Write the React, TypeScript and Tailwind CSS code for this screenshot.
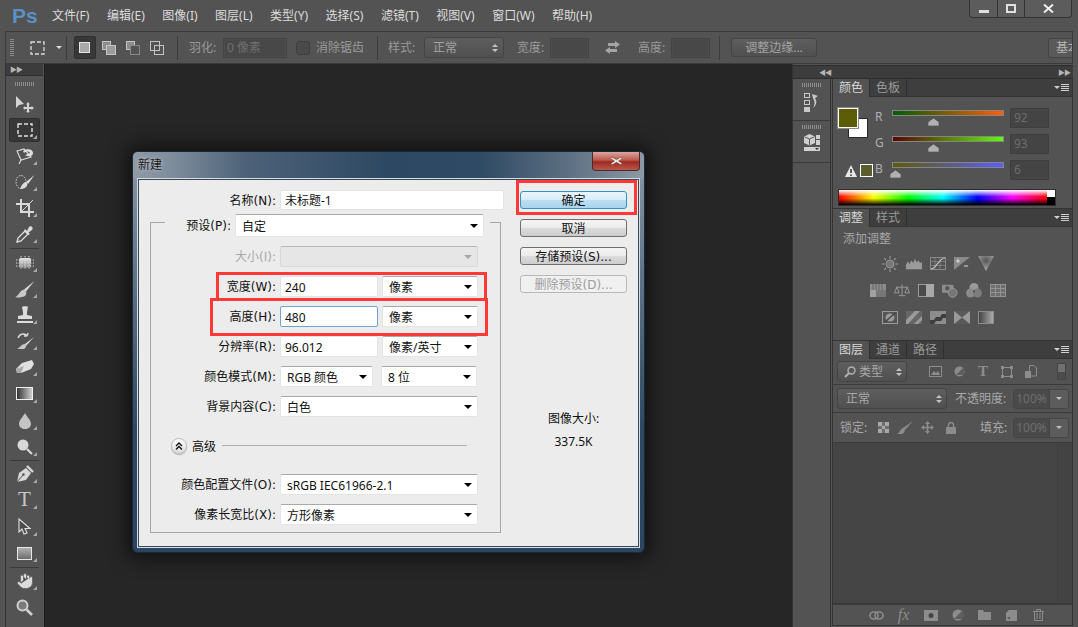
import type { ReactNode } from "react";
import { Hand } from "lucide-react";

const menus = ["文件(F)", "编辑(E)", "图像(I)", "图层(L)", "类型(Y)", "选择(S)", "滤镜(T)", "视图(V)", "窗口(W)", "帮助(H)"];
const labelFont = "font-['DejaVu_Sans','Noto_Sans_CJK_SC',sans-serif]";

function Corner() {
  return <span className="absolute right-[3px] bottom-[4px] w-0 h-0 border-l-[4px] border-l-transparent border-b-[4px] border-b-[#a8a8a8]" />;
}

function Grip({ w = 20 }: { w?: number }) {
  return (
    <svg width={w} height="4">
      <line x1="0" y1="2" x2={w} y2="2" stroke="#8c8c8c" strokeWidth="4" strokeDasharray="1 1" />
    </svg>
  );
}

const toolIcons: { icon?: ReactNode; corner?: boolean; active?: boolean; tall?: boolean; sep?: string }[] = [
  {
    icon: (
      <svg width="20" height="18" viewBox="0 0 20 18" fill="#d4d4d4">
        <path d="M1 1 L1 13 L4 10 L9 9 Z" />
        <path d="M13 7 L15 9.5 L14 9.5 L14 12 L16.5 12 L16.5 11 L19 13 L16.5 15 L16.5 14 L14 14 L14 16 L15 16 L13 18 L11 16 L12 16 L12 14 L10 14 L10 15 L8 13 L10 11 L10 12 L12 12 L12 9.5 L11 9.5 Z" />
      </svg>
    ),
  },
  {
    icon: (
      <svg width="16" height="14">
        <rect x="1" y="1" width="14" height="12" fill="none" stroke="#e0e0e0" strokeWidth="1.4" strokeDasharray="4 2" />
      </svg>
    ),
    active: true,
    corner: true,
  },
  {
    icon: (
      <svg width="18" height="16" viewBox="0 0 18 16" fill="none" stroke="#d8d8d8" strokeWidth="1.2">
        <path d="M1 3 L8 1 L15 9 L5 12 Z" />
        <path d="M7 3 C11 0 17 1 17 5 C17 9 12 9 9 7 C11 6 13 6 14 5 C13 3 10 3 8 5 Z" fill="#e0e0e0" stroke="none" />
        <path d="M5 12 L3 16" />
      </svg>
    ),
    corner: true,
  },
  {
    icon: (
      <svg width="20" height="16" viewBox="0 0 20 16" fill="none">
        <ellipse cx="6" cy="8" rx="5" ry="6.5" stroke="#d8d8d8" strokeDasharray="1.5 1.2" />
        <path d="M19.5 1 L11 8 L13 10 Z" fill="#dcdcdc" />
        <path d="M5 15 C7 10 9 8 11 8 C14 10 12 15 5 15 Z" fill="#dcdcdc" />
      </svg>
    ),
    corner: true,
  },
  {
    icon: (
      <svg width="18" height="18" viewBox="0 0 18 18" fill="none" stroke="#dadada" strokeWidth="2">
        <path d="M0 5 L13 5 L13 18" />
        <path d="M5 0 L5 13 L18 13" />
        <path d="M4 14 L17 1" strokeWidth="1" />
      </svg>
    ),
    corner: true,
  },
  {
    icon: (
      <svg width="18" height="18" viewBox="0 0 18 18">
        <path d="M1 17 L2 13 L9 6 L12 9 L5 16 Z" fill="none" stroke="#e0e0e0" strokeWidth="1.3" />
        <path d="M9 4 L11 6 L13 2 C15 0 18 3 16 5 L12.5 7.5 L14 9 L12 10 L8 6 Z" fill="#dcdcdc" />
      </svg>
    ),
    corner: true,
  },
  { sep: "h-[3px]" },
  {
    icon: (
      <svg width="18" height="14" viewBox="0 0 18 14">
        <defs>
          <linearGradient id="heal" x1="0" y1="0" x2="0" y2="1">
            <stop offset="0" stopColor="#e8e8e8" />
            <stop offset="1" stopColor="#777" />
          </linearGradient>
        </defs>
        <rect x="3" y="2" width="12" height="10" rx="1.5" fill="url(#heal)" />
        <path d="M0 4 H18 M0 7 H18 M0 10 H18 M5 0 V14 M9 0 V14 M13 0 V14" stroke="#dcdcdc" strokeDasharray="1.4 1.4" fill="none" />
      </svg>
    ),
    corner: true,
  },
  {
    icon: (
      <svg width="20" height="18" viewBox="0 0 20 18">
        <path d="M19.5 1 L9 9.5 L11 11.5 Z" fill="#d8d8d8" />
        <path d="M0 17 C4 16 5 10 9 9.5 C12 10.5 12 14 10 16 C6 17.5 4 18 0 17 Z" fill="#c8c8c8" />
      </svg>
    ),
    corner: true,
  },
  {
    icon: (
      <svg width="16" height="18" viewBox="0 0 16 18" fill="#dcdcdc">
        <path d="M5 1 C5 0 11 0 11 1 L10 6 L10 9 L15 10 L15 13 L1 13 L1 10 L6 9 L6 6 Z" />
        <rect x="0" y="15" width="16" height="2" />
      </svg>
    ),
    corner: true,
  },
  {
    icon: (
      <svg width="20" height="18" viewBox="0 0 20 18">
        <path d="M3 6 C5 1 10 1 12 4 M12 4 L13 1 M12 4 L9 4" fill="none" stroke="#d8d8d8" strokeWidth="1.5" />
        <path d="M19 5 L10 12 L11 14 Z" fill="#d8d8d8" />
        <path d="M2 17 C5 16 6 12 10 12 C12 13 11 16 9 17 Z" fill="#c8c8c8" />
      </svg>
    ),
    corner: true,
  },
  {
    icon: (
      <svg width="18" height="14" viewBox="0 0 18 14">
        <path d="M6 3 L16 0 L18 4 L15 9 L5 13 L1 13 L0 9 Z" fill="#e0e0e0" />
        <path d="M0 9 L1 13 L5 13 L8 6 Z" fill="#a8a8a8" />
      </svg>
    ),
    corner: true,
  },
  { icon: <div className="w-[17px] h-[13px] border border-[#f0f0f0] bg-[linear-gradient(90deg,#333,#cfcfcf)]" />, corner: true, tall: true },
  {
    icon: (
      <svg width="12" height="16" viewBox="0 0 12 16">
        <path d="M6 0 C8 4 12 7 12 11 C12 14 9 16 6 16 C3 16 0 14 0 11 C0 7 4 4 6 0 Z" fill="#c4c4c4" />
      </svg>
    ),
    corner: true,
    tall: true,
  },
  {
    icon: (
      <svg width="16" height="16" viewBox="0 0 16 16">
        <circle cx="6" cy="6" r="5.5" fill="#d8d8d8" />
        <path d="M10 10 L15 15" stroke="#d8d8d8" strokeWidth="2.2" />
      </svg>
    ),
    corner: true,
  },
  { sep: "h-[1px]" },
  {
    icon: (
      <svg width="18" height="18" viewBox="0 0 18 18">
        <path d="M1 17 L3 8 L10 3 L15 8 L10 15 Z" fill="#d8d8d8" />
        <path d="M1 17 L7 10" stroke="#535353" strokeWidth="1" />
        <circle cx="7.5" cy="9.5" r="1.2" fill="#535353" />
        <path d="M11 1 L17 7" stroke="#d8d8d8" strokeWidth="2.4" />
      </svg>
    ),
    corner: true,
  },
  {
    icon: <span className="font-['Liberation_Serif',serif] text-[21px] leading-none text-[#c8c8c8]">T</span>,
    corner: true,
  },
  {
    icon: (
      <svg width="14" height="18" viewBox="0 0 14 18">
        <path d="M1 1 L1 14 L4 11 L6 16 L9 15 L7 10.5 L12 10.5 Z" fill="#4a4a4a" stroke="#e0e0e0" strokeWidth="1.1" />
      </svg>
    ),
    corner: true,
    tall: true,
  },
  { icon: <div className="w-[15px] h-[13px] border border-[#e8e8e8] bg-[linear-gradient(180deg,#b0b0b0,#6c6c6c)]" />, corner: true },
  { sep: "h-[2px]" },
  { icon: <Hand className="w-[18px] h-[18px] fill-[#dcdcdc] text-[#666]" strokeWidth={1.2} />, corner: true },
  {
    icon: (
      <svg width="17" height="17" viewBox="0 0 17 17">
        <circle cx="6.5" cy="6.5" r="5" fill="#7a7a7a" stroke="#cfcfcf" strokeWidth="2" />
        <path d="M10.5 10.5 L16 16" stroke="#cfcfcf" strokeWidth="2.6" />
      </svg>
    ),
  },
];

function Toolbox() {
  return (
    <div className="w-[39px] ml-[5px] border-l border-[#333] flex flex-col items-center shrink-0 overflow-hidden pr-[1px]">
      <div className="w-full h-[12px] shrink-0 bg-[#3c3c3c] border-b border-[#2e2e2e] flex items-center pl-[4px] text-[7px] leading-none text-[#b4b4b4] tracking-[-1px]">
        ▶▶
      </div>
      <div className="h-[15px] shrink-0 flex items-center">
        <Grip />
      </div>
      {toolIcons.map((t, i) => {
        if (t.sep) {
          return (
            <div key={i} className={`w-[29px] shrink-0 flex flex-col justify-center ${t.sep}`}>
              <div className="h-px bg-[#3a3a3a]" />
            </div>
          );
        }
        return (
          <div key={i} className={`relative w-[31px] shrink-0 flex items-center justify-center ${t.tall ? "h-[27px]" : "h-[26px]"}`}>
            {t.active && <div className="absolute inset-x-0 -inset-y-[-1px] rounded-[2px] bg-[#383838] border border-[#2f2f2f]" />}
            <div className="relative">{t.icon}</div>
            {t.corner && <Corner />}
          </div>
        );
      })}
    </div>
  );
}

function ModeIcon({ kind }: { kind: number }) {
  return (
    <svg width="14" height="14" viewBox="0 0 14 14">
      {kind === 0 && <rect x="1.5" y="1.5" width="10" height="10" fill="#a8a8a8" stroke="#e4e4e4" />}
      {kind === 1 && (
        <>
          <rect x="0.5" y="0.5" width="8" height="8" fill="#8c8c8c" stroke="#c4c4c4" />
          <rect x="4.5" y="4.5" width="9" height="9" fill="#9c9c9c" stroke="#c4c4c4" />
        </>
      )}
      {kind === 2 && (
        <>
          <rect x="0.5" y="0.5" width="8" height="8" fill="#8c8c8c" stroke="#c4c4c4" />
          <rect x="4.5" y="4.5" width="9" height="9" fill="#535353" stroke="#888" />
        </>
      )}
      {kind === 3 && (
        <>
          <rect x="0.5" y="0.5" width="9" height="9" fill="none" stroke="#c4c4c4" />
          <rect x="4.5" y="4.5" width="9" height="9" fill="none" stroke="#c4c4c4" />
        </>
      )}
    </svg>
  );
}

function Updown() {
  return (
    <span className="flex flex-col gap-[2px]">
      <span className="w-0 h-0 border-x-[3px] border-x-transparent border-b-[3px] border-b-[#c4c4c4]" />
      <span className="w-0 h-0 border-x-[3px] border-x-transparent border-t-[3px] border-t-[#c4c4c4]" />
    </span>
  );
}

function OptionsBar() {
  const sep = <div className="w-px h-[24px] bg-[#3c3c3c]" />;
  const field = "h-[20px] bg-[#484848] border border-[#444] shadow-[inset_0_0_0_1px_#4c4c4c]";
  return (
    <div className="h-[33px] mx-[5px] border-t border-b border-t-[#3a3a3a] border-b-[#3a3a3a] border-x border-x-[#3a3a3a] flex items-center text-[12px] text-[#9a9a9a] overflow-hidden shrink-0">
      <div className="ml-[4px] w-[4px] h-[18px] bg-[repeating-linear-gradient(180deg,#8a8a8a_0,#8a8a8a_1px,transparent_1px,transparent_2px)]" />
      <svg width="16" height="14" className="ml-[16px]">
        <rect x="1" y="1" width="13" height="12" fill="none" stroke="#dcdcdc" strokeWidth="1.3" strokeDasharray="4 2" />
      </svg>
      <span className="ml-[10px] w-0 h-0 border-x-[3px] border-x-transparent border-t-[3px] border-t-[#dcdcdc]" />
      <div className="ml-[4px]">{sep}</div>
      <div className="ml-[7px] w-[22px] h-[23px] rounded-[2px] bg-[#383838] border border-[#303030] flex items-center justify-center">
        <ModeIcon kind={0} />
      </div>
      <div className="ml-[6px] w-[14px]"><ModeIcon kind={1} /></div>
      <div className="ml-[10px] w-[14px]"><ModeIcon kind={2} /></div>
      <div className="ml-[10px] w-[14px]"><ModeIcon kind={3} /></div>
      <div className="ml-[13px]">{sep}</div>
      <span className="ml-[11px] w-[28px] whitespace-nowrap">羽化:</span>
      <div className={`ml-[6px] w-[64px] ${field} px-[3px] leading-[18px] text-[#6e6e6e]`}>0 像素</div>
      <div className="ml-[9px] w-[14px] h-[14px] rounded-[3px] bg-[#4a4a4a] border border-[#3e3e3e]" />
      <span className="ml-[6px] w-[48px] whitespace-nowrap">消除锯齿</span>
      <div className="ml-[13px]">{sep}</div>
      <span className="ml-[10px] w-[30px] whitespace-nowrap">样式:</span>
      <div className="ml-[6px] w-[80px] h-[21px] rounded-[3px] bg-[linear-gradient(180deg,#5e5e5e,#505050)] border border-[#444] flex items-center justify-between pl-[8px] pr-[5px] text-[#a4a4a4]">
        正常
        <Updown />
      </div>
      <span className="ml-[13px] w-[30px] whitespace-nowrap">宽度:</span>
      <div className={`ml-[3px] w-[39px] ${field}`} />
      <svg width="15" height="13" viewBox="0 0 15 13" className="ml-[16px]" fill="#a4a4a4">
        <path d="M10 0 L15 3.5 L10 7 L10 5 L3 5 L3 2 L10 2 Z" />
        <path d="M5 6 L0 9.5 L5 13 L5 11 L12 11 L12 8 L5 8 Z" />
      </svg>
      <span className="ml-[18px] w-[30px] whitespace-nowrap">高度:</span>
      <div className={`ml-[3px] w-[39px] ${field}`} />
      <div className="ml-[9px]">{sep}</div>
      <div className="ml-[11px] w-[86px] h-[19px] rounded-[3px] bg-[linear-gradient(180deg,#5e5e5e,#505050)] border border-[#444] text-center leading-[17px] text-[#a4a4a4]">
        调整边缘...
      </div>
      <div className="ml-[231px] w-[24px] h-[20px] rounded-l-[3px] bg-[#5a5a5a] border border-r-0 border-[#444] pl-[7px] leading-[18px] text-[#b4b4b4] whitespace-nowrap overflow-hidden">
        基本
      </div>
    </div>
  );
}

function Tabs({ items }: { items: string[] }) {
  return (
    <div className="h-[18px] bg-[#3e3e3e] border-b border-[#343434] flex items-stretch relative shrink-0 text-[12px]">
      {items.map((t, i) => (
        <div
          key={t}
          className={
            i === 0
              ? "w-[37px] text-center leading-[18px] bg-[#535353] text-[#d6d6d6] border-r border-[#2f2f2f] h-[18px]"
              : "w-[37px] text-center leading-[17px] text-[#9a9a9a] border-r border-[#2f2f2f]"
          }
        >
          {t}
        </div>
      ))}
      <div className="ml-auto mr-[3px] flex items-center gap-[1px]">
        <span className="w-0 h-0 border-x-[3px] border-x-transparent border-t-[3px] border-t-[#d0d0d0]" />
        <span className="w-[8px] h-[7px] bg-[repeating-linear-gradient(180deg,#d0d0d0_0,#d0d0d0_1px,transparent_1px,transparent_2px)]" />
      </div>
    </div>
  );
}

function Thumb({ x }: { x: string }) {
  return (
    <svg width="11" height="8" className={`absolute top-[8px] ${x}`}>
      <path d="M0 8 L0 4 L5.5 0 L11 4 L11 8 Z" fill="#b0b0b0" stroke="#3a3a3a" strokeWidth="0.5" />
    </svg>
  );
}

function Slider({ label, bar, value, thumb, extra }: { label: string; bar: string; value: string; thumb: string; extra?: ReactNode }) {
  return (
    <div className="h-[26px] flex items-start relative">
      {extra}
      <span className="absolute left-[37px] top-[1px] text-[12px] leading-[16px] text-[#b0b0b0]">{label}</span>
      <div className="absolute left-[54px] top-[2px] w-[112px] h-[16px]">
        <div className={`h-[6px] border border-[#858585] ${bar}`} />
        <Thumb x={thumb} />
      </div>
      <div className="absolute left-[172px] top-0 w-[39px] h-[20px] bg-[#444] border border-[#3e3e3e] px-[3px] text-[12px] leading-[18px] text-[#6c6c6c]">{value}</div>
    </div>
  );
}

function ColorPanel() {
  return (
    <div className="h-[130px] flex flex-col border-b border-[#343434] shrink-0">
      <Tabs items={["颜色", "色板"]} />
      <div className="flex-1 px-[5px] pt-[11px] relative">
        <div className="absolute left-[15px] top-[21px] w-[20px] h-[20px] bg-white border border-[#2a2a2a]" />
        <div className="absolute left-[5px] top-[11px] w-[20px] h-[20px] bg-[#5c5d06] border border-white outline outline-[#8a8a8a]" />
        <Slider label="R" bar="bg-[linear-gradient(90deg,#005d06,#ff5d06)]" value="92" thumb="left-[36px]" />
        <Slider label="G" bar="bg-[linear-gradient(90deg,#5c0006,#5cff06)]" value="93" thumb="left-[36px]" />
        <Slider
          label="B"
          bar="bg-[linear-gradient(90deg,#5c5d00,#5c5dff)]"
          value="6"
          thumb="-left-[2px]"
          extra={
            <div className="absolute left-[7px] top-[4px] flex items-center gap-[3px]">
              <svg width="12" height="12" viewBox="0 0 12 12">
                <path d="M6 0 L12 12 L0 12 Z" fill="#e8e8e8" />
                <path d="M6 4 V8 M6 9.5 V11" stroke="#222" strokeWidth="1.4" />
              </svg>
              <div className="w-[13px] h-[13px] bg-[#5c5d2e] border border-white" />
            </div>
          }
        />
        <div className="mt-[3px] w-[218px] h-[17px] flex border border-[#2e2e2e]">
          <div className="flex-1 bg-[linear-gradient(180deg,#fff_0%,transparent_45%,transparent_55%,#000_100%),linear-gradient(90deg,#f00,#ff0,#0f0,#0ff,#00f,#f0f,#f00)]" />
          <div className="w-[8px] bg-[linear-gradient(180deg,#fff_50%,#000_50%)]" />
        </div>
      </div>
    </div>
  );
}

const g = "#9a9a9a";
const adjustRows: ReactNode[][] = [
  [
    <svg key="a" width="18" height="18" viewBox="0 0 18 18">
      <circle cx="9" cy="9" r="4.5" fill="#777" stroke={g} />
      <path d="M9 0 V3 M9 15 V18 M0 9 H3 M15 9 H18 M2.5 2.5 L4.5 4.5 M13.5 13.5 L15.5 15.5 M15.5 2.5 L13.5 4.5 M2.5 15.5 L4.5 13.5" stroke={g} strokeWidth="1.2" />
    </svg>,
    <svg key="b" width="18" height="12" viewBox="0 0 18 12">
      <path d="M0 12 V7 L2 3 L4 6 L6 2 L8 5 L10 0 L12 4 L14 2 L16 5 L18 4 V12 Z" fill={g} />
    </svg>,
    <svg key="c" width="16" height="13" viewBox="0 0 16 13" fill="none" stroke="#8a8a8a">
      <rect x="0.5" y="0.5" width="15" height="12" />
      <path d="M0 4.5 H16 M0 8.5 H16 M5 0 V13 M10 0 V13" strokeWidth="0.7" />
      <path d="M1 12 C6 12 9 1 15 1" stroke="#c0c0c0" strokeWidth="1.2" />
    </svg>,
    <svg key="d" width="16" height="13" viewBox="0 0 16 13">
      <rect width="16" height="13" fill="#8a8a8a" />
      <path d="M0 13 L16 0 L16 13 Z" fill="#555" />
      <path d="M2 4 H6 M4 2 V6 M10 9 H14" stroke="#ddd" />
    </svg>,
    <svg key="e" width="16" height="15" viewBox="0 0 16 15">
      <defs>
        <radialGradient id="vib" cx="0.5" cy="0.3" r="0.6">
          <stop offset="0" stopColor="#555" />
          <stop offset="1" stopColor="#a0a0a0" />
        </radialGradient>
      </defs>
      <path d="M0 0 H16 L8 15 Z" fill="url(#vib)" />
    </svg>,
  ],
  [
    <svg key="a" width="16" height="13" viewBox="0 0 16 13">
      <rect width="16" height="6" fill="#8c8c8c" />
      <path d="M3 0 V6 M6 0 V6 M9 0 V6 M12 0 V6" stroke="#666" />
      <rect y="6" width="16" height="7" fill="#a0a0a0" />
      <rect x="6" y="6" width="10" height="7" fill="#767676" />
    </svg>,
    <svg key="b" width="17" height="15" viewBox="0 0 17 15" fill="none" stroke={g}>
      <path d="M8.5 1 V13 M5 13 H12 M2 4 H15" />
      <path d="M3 4 L0.5 10 H5.5 Z M14 4 L11.5 10 H16.5 Z" />
    </svg>,
    <svg key="c" width="16" height="13" viewBox="0 0 16 13">
      <rect x="0.5" y="0.5" width="15" height="12" fill="#4a4a4a" stroke={g} />
      <rect x="8" y="0" width="8" height="13" fill="#a8a8a8" />
    </svg>,
    <svg key="d" width="18" height="16" viewBox="0 0 18 16">
      <rect x="0" y="1" width="13" height="9" fill="#8c8c8c" />
      <circle cx="6" cy="5" r="2.5" fill="#555" />
      <circle cx="12" cy="10" r="5" fill="#777" stroke={g} />
    </svg>,
    <svg key="e" width="16" height="15" viewBox="0 0 16 15" fill={g}>
      <circle cx="8" cy="4.5" r="4.5" />
      <circle cx="4.5" cy="10" r="4.5" fill="#8a8a8a" />
      <circle cx="11.5" cy="10" r="4.5" fill="#7c7c7c" />
      <path d="M6.5 7.5 H9.5 L8 10 Z" fill="#4c4c4c" />
    </svg>,
    <svg key="f" width="16" height="13" viewBox="0 0 16 13" fill="#6e6e6e" stroke="#949494">
      <rect x="0.5" y="0.5" width="15" height="12" />
      <path d="M0 4.5 H16 M0 8.5 H16 M5.5 0 V13 M10.5 0 V13" fill="none" />
    </svg>,
  ],
  [
    <svg key="a" width="16" height="13" viewBox="0 0 16 13">
      <rect x="0.5" y="0.5" width="15" height="12" fill="#555" stroke={g} />
      <ellipse cx="8" cy="6.5" rx="4.5" ry="4" fill={g} />
      <path d="M3 11 L13 2" stroke="#444" strokeWidth="1.2" />
    </svg>,
    <svg key="b" width="16" height="13" viewBox="0 0 16 13">
      <rect width="16" height="13" fill="#666" />
      <path d="M0 9 L9 0 L14 0 L2 13 L0 13 Z M8 13 L16 5 L16 9 L12 13 Z" fill={g} />
    </svg>,
    <svg key="c" width="16" height="13" viewBox="0 0 16 13">
      <rect width="16" height="13" fill="#8c8c8c" />
      <path d="M0 13 V9 L4 9 L6 6 L10 6 L12 3 L16 3 V7 L13 7 L11 10 L6 10 L4 13 Z" fill="#3e3e3e" />
    </svg>,
    <svg key="d" width="16" height="13" viewBox="0 0 16 13">
      <rect width="16" height="13" fill="#5a5a5a" />
      <path d="M0 0 L8 6.5 L0 13 Z M16 0 L8 6.5 L16 13 Z" fill={g} />
    </svg>,
    <div key="e" className="w-[16px] h-[13px] bg-[linear-gradient(90deg,#444,#aaa)] border border-[#8c8c8c]" />,
  ],
];

function AdjustPanel() {
  return (
    <div className="h-[132px] flex flex-col border-b border-[#343434] shrink-0">
      <Tabs items={["调整", "样式"]} />
      <div className="px-[10px] pt-[2px] text-[12px] leading-[20px] text-[#a8a8a8]">添加调整</div>
      <div className="flex flex-col items-center mt-[6px] gap-[10px] pr-[29px]">
        {adjustRows.map((row, i) => (
          <div key={i} className="h-[17px] flex items-center justify-center gap-[8px]">
            {row.map((ic, j) => (
              <div key={j} className="w-[16px] flex justify-center">
                {ic}
              </div>
            ))}
          </div>
        ))}
      </div>
    </div>
  );
}

const dim = "#8c8c8c";

function LayersPanel() {
  const pct = (
    <div className="w-[56px] h-[20px] flex rounded-[3px] border border-[#444] overflow-hidden">
      <div className="w-[35px] bg-[#4a4a4a] text-[#6e6e6e] text-center leading-[18px]">100%</div>
      <div className="flex-1 bg-[#5c5c5c] flex items-center justify-center border-l border-[#444]">
        <span className="w-0 h-0 border-x-[3px] border-x-transparent border-t-[3px] border-t-[#c0c0c0]" />
      </div>
    </div>
  );
  const selectBox = "h-[21px] rounded-[3px] bg-[linear-gradient(180deg,#5e5e5e,#505050)] border border-[#444] flex items-center justify-between pr-[4px] text-[#a8a8a8]";
  const footer: ReactNode[] = [
    <svg key="link" width="15" height="9" viewBox="0 0 15 9" fill="none" stroke={dim} strokeWidth="1.6">
      <rect x="1" y="1" width="8" height="7" rx="3.5" />
      <rect x="6" y="1" width="8" height="7" rx="3.5" />
    </svg>,
    <span key="fx" className="font-['Liberation_Serif',serif] italic text-[16px] leading-none text-[#8c8c8c]">fx</span>,
    <svg key="mask" width="14" height="11">
      <rect width="14" height="11" fill={dim} />
      <circle cx="7" cy="5.5" r="2.5" fill="#444" />
    </svg>,
    <svg key="adj" width="12" height="12">
      <circle cx="6" cy="6" r="5.5" fill={dim} />
      <path d="M2 10 L10 2 A5.5 5.5 0 0 1 10 10 Z" fill="#5e5e5e" />
    </svg>,
    <svg key="folder" width="13" height="10" viewBox="0 0 13 10">
      <path d="M0 0 H5 L6 2 H13 V10 H0 Z" fill={dim} />
    </svg>,
    <svg key="new" width="11" height="11" viewBox="0 0 11 11">
      <path d="M3 0 H11 V11 H0 V3 Z" fill={dim} />
      <path d="M1 7 H4 V10 Z" fill="#535353" />
    </svg>,
    <svg key="trash" width="11" height="12" viewBox="0 0 11 12" fill="none" stroke={dim}>
      <path d="M0 2.5 H11 M3.5 2 V0.5 H7.5 V2 M1.5 3 V11.5 H9.5 V3 M4 4 V10 M7 4 V10" />
    </svg>,
  ];
  return (
    <div className="flex-1 flex flex-col text-[12px] min-h-0">
      <Tabs items={["图层", "通道", "路径"]} />
      <div className="h-[26px] border-b border-[#3a3a3a] flex items-center pl-[4px] shrink-0">
        <div className={`w-[70px] pl-[6px] ${selectBox}`}>
          <span className="flex items-center gap-[3px]">
            <svg width="12" height="12" viewBox="0 0 12 12" fill="none" stroke="#b0b0b0" strokeWidth="1.4">
              <circle cx="7.5" cy="4.5" r="3.5" />
              <path d="M5 7 L1 11" strokeWidth="2" />
            </svg>
            类型
          </span>
          <Updown />
        </div>
        <div className="ml-[21px] w-[14px] flex justify-center">
          <svg width="13" height="11" viewBox="0 0 13 11">
            <rect x="0.5" y="0.5" width="12" height="10" fill="#505050" stroke={dim} />
            <path d="M2 9 L5 5 L7 7 L9 5 L11 9 Z" fill={dim} />
          </svg>
        </div>
        <div className="ml-[10px] w-[14px] flex justify-center">
          <svg width="11" height="11">
            <circle cx="5.5" cy="5.5" r="5" fill={dim} />
            <path d="M2 9 L9 2 A5 5 0 0 1 9 9 Z" fill="#5e5e5e" />
          </svg>
        </div>
        <span className="ml-[10px] w-[14px] text-center font-['Liberation_Serif',serif] text-[15px] leading-none text-[#8c8c8c] font-bold">T</span>
        <div className="ml-[10px] w-[14px] flex justify-center">
          <svg width="12" height="12" fill="none" stroke={dim}>
            <rect x="1.5" y="1.5" width="9" height="9" />
            <path d="M0 0 H3 V3 H0 Z M9 0 H12 V3 H9 Z M0 9 H3 V12 H0 Z M9 9 H12 V12 H9 Z" fill={dim} stroke="none" />
          </svg>
        </div>
        <div className="ml-[10px] w-[14px] flex justify-center">
          <svg width="12" height="13" viewBox="0 0 12 13">
            <path d="M4.5 0.5 H9 L11.5 3 V11 H4.5 Z" fill="none" stroke={dim} />
            <rect x="0" y="6" width="6" height="7" fill={dim} />
          </svg>
        </div>
        <div className="ml-[19px] w-[9px] h-[17px] flex flex-col border border-[#444]">
          <div className="flex-1 bg-[#707070]" />
          <div className="flex-1 bg-[#4c4c4c]" />
        </div>
      </div>
      <div className="h-[28px] border-b border-[#3a3a3a] flex items-center pl-[4px] shrink-0">
        <div className={`w-[110px] pl-[8px] ${selectBox}`}>
          正常
          <Updown />
        </div>
        <span className="ml-[8px] w-[57px] text-[#a8a8a8] whitespace-nowrap">不透明度:</span>
        <div className="ml-[1px]">{pct}</div>
      </div>
      <div className="h-[30px] border-b border-[#3a3a3a] flex items-center pl-[7px] shrink-0 text-[#a8a8a8]">
        <span className="w-[32px] whitespace-nowrap">锁定:</span>
        <svg width="11" height="11" className="ml-[6px]">
          <rect width="11" height="11" fill="#6e6e6e" />
          <path d="M0 0 H4 V4 H0 Z M7 0 H11 V4 H7 Z M4 4 H7 V7 H4 Z M0 7 H4 V11 H0 Z M7 7 H11 V11 H7 Z" fill="#a8a8a8" />
        </svg>
        <svg width="16" height="13" viewBox="0 0 16 13" className="ml-[8px]">
          <path d="M16 0 L6 7 L8 9 Z" fill={dim} />
          <path d="M0 13 C3 12 3 8 6 7 C9 8 8 12 5 13 Z" fill={dim} />
        </svg>
        <svg width="13" height="13" viewBox="0 0 13 13" className="ml-[8px]" fill={dim}>
          <path d="M6.5 0 L9 3 H7.3 V5.7 H10 V4 L13 6.5 L10 9 V7.3 H7.3 V10 H9 L6.5 13 L4 10 H5.7 V7.3 H3 V9 L0 6.5 L3 4 V5.7 H5.7 V3 H4 Z" />
        </svg>
        <svg width="10" height="12" viewBox="0 0 10 12" className="ml-[12px]">
          <rect y="5" width="10" height="7" fill={dim} />
          <path d="M2.5 5 V3 A2.5 2.5 0 0 1 7.5 3 V5" fill="none" stroke={dim} strokeWidth="1.4" />
        </svg>
        <span className="ml-[24px] w-[32px] whitespace-nowrap">填充:</span>
        <div className="ml-[1px]">{pct}</div>
      </div>
      <div className="flex-1 bg-[#454545] flex justify-end min-h-0">
        <div className="w-[15px] bg-[#434343] border-l border-[#3e3e3e]" />
      </div>
      <div className="h-[22px] border-t-2 border-[#3a3a3a] flex items-center pl-[30px] shrink-0">
        {footer.map((ic, i) => (
          <div key={i} className="w-[27px] flex justify-center">
            {ic}
          </div>
        ))}
      </div>
    </div>
  );
}

function RightDock() {
  return (
    <div className="w-[286px] shrink-0 border-l border-[#333] flex flex-col pt-[1px]">
      <div className="h-[14px] mr-[5px] bg-[#3c3c3c] border-y border-[#2e2e2e] flex items-center justify-between pr-[3px] pl-[26px] text-[7px] leading-none text-[#b4b4b4] tracking-[-1px] shrink-0">
        ◀◀<span>▶▶</span>
      </div>
      <div className="flex-1 flex mr-[5px] min-h-0">
        <div className="w-[38px] shrink-0 border-r border-[#343434] flex flex-col">
          <div className="h-[42px] border-b border-[#3a3a3a] flex flex-col items-center pt-[4px] gap-[6px]">
            <Grip />
            <svg width="15" height="19" viewBox="0 0 15 19">
              <rect x="0.5" y="0.5" width="5" height="4" fill="none" stroke="#c8c8c8" />
              <rect x="0.5" y="7.5" width="5" height="4" fill="none" stroke="#c8c8c8" />
              <rect y="14" width="6" height="5" fill="#c8c8c8" />
              <path d="M8 1 L14 3 L11 5 C13 8 13 12 9 15 C11 12 11 8 9 5 Z" fill="#c8c8c8" />
            </svg>
          </div>
          <div className="h-[42px] border-b border-[#3a3a3a] flex flex-col items-center pt-[4px] gap-[5px]">
            <Grip />
            <svg width="16" height="17" viewBox="0 0 16 17">
              <path d="M5.5 0 L11 2.5 V9 L5.5 11.5 L0 9 V2.5 Z" fill="#d0d0d0" />
              <path d="M5.5 5 V11 M0.5 2.8 L5.5 5 L10.5 2.8" stroke="#555" fill="none" />
              <rect x="12" y="1" width="4" height="4" fill="#d0d0d0" />
              <rect x="12" y="6" width="4" height="5" fill="#d0d0d0" />
              <rect y="13" width="16" height="4" fill="#d0d0d0" />
              <path d="M11 14 H15 L13 16 Z" fill="#333" />
            </svg>
          </div>
        </div>
        <div className="w-[241px] ml-[1px] mb-[1px] flex flex-col border-x border-b border-[#343434]">
          <ColorPanel />
          <AdjustPanel />
          <LayersPanel />
        </div>
      </div>
    </div>
  );
}

function Arrow({ light }: { light?: boolean }) {
  return <span className={`w-0 h-0 border-x-[4px] border-x-transparent border-t-[4px] ${light ? "border-t-[#a8a8a8]" : "border-t-black"}`} />;
}

function Sel({ w, children, tall }: { w: string; children?: ReactNode; tall?: boolean }) {
  return (
    <div className={`${w} ${tall ? "h-[23px]" : "h-[21px]"} bg-white border border-[#e4e4e4] border-t-[#a9a9a9] rounded-[2px] flex items-center justify-between pl-[6px] pr-[5px] whitespace-nowrap`}>
      <span className="pt-[2px]">{children}</span>
      <Arrow />
    </div>
  );
}

function Inp({ w, children, focus }: { w: string; children?: ReactNode; focus?: boolean }) {
  return (
    <div className={`${w} h-[21px] bg-white border rounded-[2px] px-[4px] leading-[21px] ${focus ? "border-[#6ea4cf]" : "border-[#e0e4e8]"}`}>{children}</div>
  );
}

function Row({ label, children, disabled }: { label: string; children: ReactNode; disabled?: boolean }) {
  return (
    <div className="flex items-center h-[21px] mt-[9px]">
      <div className={`w-[125px] text-right whitespace-nowrap pt-[1px] ${labelFont} ${disabled ? "text-[#a8a8a8]" : ""}`}>{label}</div>
      <div className="ml-[4px] flex gap-[4px]">{children}</div>
    </div>
  );
}

function DlgButton({ children, kind }: { children: ReactNode; kind?: "primary" | "disabled" }) {
  const cls =
    kind === "primary"
      ? "border-[#2f93c8] bg-[linear-gradient(180deg,#e8f5fc_0%,#d8edf8_50%,#bcdff2_50%,#a9d4ec_100%)]"
      : kind === "disabled"
        ? "border-[#b8b8b8] bg-[#f0f0f0] text-[#9c9c9c]"
        : "border-[#6f6f6f] bg-[linear-gradient(180deg,#f4f4f4_0%,#ebebeb_50%,#dcdcdc_50%,#cdcdcd_100%)]";
  return <div className={`h-[18px] w-[107px] mb-[10px] rounded-[3px] border text-center leading-[18px] text-[12px] whitespace-nowrap ${labelFont} ${cls}`}>{children}</div>;
}

function Dialog() {
  return (
    <div className="absolute left-[87px] top-[87px] w-[513px] h-[402px] rounded-[6px] border border-[#1c2a38] bg-[linear-gradient(180deg,#8c99a6_0%,#61758a_30%,#2c4862_70%,#2a4660_100%)] shadow-[0_0_18px_6px_rgba(0,0,0,0.55)] flex flex-col">
      <div className="h-[27px] shrink-0 rounded-t-[5px] bg-[linear-gradient(90deg,#8f9ba6_0%,#7d8c9b_8%,#4d6279_22%,#2d4862_50%,#2f4a64_68%,#5c6f82_85%,#8d99a4_100%)] flex justify-between">
        <span className="ml-[5px] mt-[4px] text-[12px] leading-[18px] text-[#1c1c1c] [text-shadow:0_0_4px_rgba(255,255,255,0.6)]">新建</span>
        <div className="mr-[4px] w-[48px] h-[19px] rounded-b-[4px] border border-t-0 border-[#4a2a2a] bg-[linear-gradient(180deg,#d9a79f_0%,#c0574c_45%,#9c2a1e_55%,#b85a4c_100%)] flex items-center justify-center">
          <svg width="11" height="8" viewBox="0 0 14 10">
            <path d="M1 0 L7 3.5 L13 0 L14 2 L9.5 5 L14 8 L13 10 L7 6.5 L1 10 L0 8 L4.5 5 L0 2 Z" fill="#f4f4f4" stroke="#5a2a26" strokeWidth="0.6" />
          </svg>
        </div>
      </div>
      <div className="mx-[5px] h-[368px] bg-[#ececec] border border-[#3a4854] outline outline-[#d4dde4] flex text-[12px] text-[#111]">
        <div className="w-[381px] pt-[10px] shrink-0">
          <div className="flex items-center">
            <div className={`w-[137px] text-right whitespace-nowrap pt-[1px] ${labelFont}`}>名称(N):</div>
            <div className="ml-[4px] w-[224px] h-[20px] bg-white border border-[#e0e4e8] rounded-[2px] px-[4px] leading-[20px]">未标题-1</div>
          </div>
          <div className="ml-[11px] mt-[12px] w-[351px] h-[311px] border-x border-b border-[#a6a6a6]">
            <div className="flex justify-between h-px">
              <div className="w-[14px] bg-[#a6a6a6]" />
              <div className="w-[10px] bg-[#a6a6a6]" />
            </div>
            <div className="flex items-center h-[23px] -mt-[9px]">
              <div className={`w-[80px] text-right whitespace-nowrap pt-[1px] ${labelFont}`}>预设(P):</div>
              <div className="ml-[4px]">
                <Sel w="w-[249px]" tall>
                  自定
                </Sel>
              </div>
            </div>
            <Row label="大小(I):" disabled>
              <div className="w-[198px] h-[21px] bg-[#e6e6e6] border border-[#d8d8d8] border-t-[#b8b8b8] rounded-[2px] flex items-center justify-end pr-[5px]">
                <Arrow light />
              </div>
            </Row>
            <Row label="宽度(W):">
              <Inp w="w-[98px]">240</Inp>
              <Sel w="w-[96px]">像素</Sel>
            </Row>
            <Row label="高度(H):">
              <Inp w="w-[98px]" focus>
                480
              </Inp>
              <Sel w="w-[96px]">像素</Sel>
            </Row>
            <Row label="分辨率(R):">
              <Inp w="w-[98px]">96.012</Inp>
              <Sel w="w-[96px]">像素/英寸</Sel>
            </Row>
            <Row label="颜色模式(M):">
              <Sel w="w-[93px]">RGB 颜色</Sel>
              <div className="ml-[4px]">
                <Sel w="w-[96px]">8 位</Sel>
              </div>
            </Row>
            <Row label="背景内容(C):">
              <Sel w="w-[198px]">白色</Sel>
            </Row>
            <div className="h-[18px] mt-[20px] flex items-center pl-[20px]">
              <div className="w-[16px] h-[16px] rounded-full border border-[#bdbdbd] bg-[linear-gradient(180deg,#fff,#dcdcdc)] flex items-center justify-center shadow-[0_1px_1px_rgba(0,0,0,0.25)]">
                <svg width="8" height="8" viewBox="0 0 8 8" fill="none" stroke="#111" strokeWidth="1.3">
                  <path d="M1 4 L4 1 L7 4 M1 7.5 L4 4.5 L7 7.5" />
                </svg>
              </div>
              <span className="ml-[5px] pt-[2px]">高级</span>
              <div className="ml-[6px] w-[245px] h-px bg-[#b0b0b0] -mt-[2px]" />
            </div>
            <div className="h-[10px]" />
            <Row label="颜色配置文件(O):">
              <Sel w="w-[198px]">sRGB IEC61966-2.1</Sel>
            </Row>
            <Row label="像素长宽比(X):">
              <Sel w="w-[198px]">方形像素</Sel>
            </Row>
          </div>
        </div>
        <div className="pt-[11px] w-[107px] flex flex-col">
          <DlgButton kind="primary">确定</DlgButton>
          <DlgButton>取消</DlgButton>
          <DlgButton>存储预设(S)...</DlgButton>
          <DlgButton kind="disabled">删除预设(D)...</DlgButton>
          <div className="mt-[107px] text-center leading-[18px]">图像大小:</div>
          <div className="mt-[5px] text-center leading-[18px]">337.5K</div>
        </div>
      </div>
      <div className="absolute left-[383px] top-[28px] w-[121px] h-[35px] border-[3px] border-[#ff3838]" />
      <div className="absolute left-[83px] top-[120px] w-[271px] h-[29px] border-[3px] border-[#ff3838]" />
      <div className="absolute left-[77px] top-[146px] w-[278px] h-[38px] border-[3px] border-[#ff3838]" />
    </div>
  );
}

export default function App() {
  return (
    <div className="w-[1078px] h-[627px] bg-[#535353] overflow-hidden flex flex-col relative font-['Noto_Sans','Noto_Sans_CJK_SC',sans-serif]">
      <div className="h-[31px] shrink-0 flex items-center text-[12px] text-[#dcdcdc] relative">
        <span className="ml-[12px] w-[40px] font-['Liberation_Sans',sans-serif] font-bold text-[21px] leading-none text-[#5b90c4]">Ps</span>
        <div className="flex gap-[17.5px]">
          {menus.map((m) => (
            <span key={m} className="whitespace-nowrap">
              {m}
            </span>
          ))}
        </div>
        <div className="absolute right-[6px] top-0 w-[103px] h-[18px] flex border border-t-0 border-[#333] rounded-b-[4px] bg-[#5c5c5c]">
          <div className="w-[28px] border-r border-[#333] flex items-center justify-center">
            <div className="w-[10px] h-[3px] mt-[5px] bg-[#e0e0e0]" />
          </div>
          <div className="w-[27px] border-r border-[#333] flex items-center justify-center">
            <div className="w-[10px] h-[9px] border-2 border-[#e0e0e0]" />
          </div>
          <div className="flex-1 flex items-center justify-center">
            <svg width="11" height="9" viewBox="0 0 11 9">
              <path d="M1 0.5 L10 8.5 M10 0.5 L1 8.5" stroke="#eee" strokeWidth="2" />
            </svg>
          </div>
        </div>
      </div>
      <OptionsBar />
      <div className="flex-1 flex min-h-0">
        <Toolbox />
        <div className="flex-1 relative bg-[#262626] border-l border-[#1e1e1e]">
          <Dialog />
        </div>
        <RightDock />
      </div>
    </div>
  );
}
